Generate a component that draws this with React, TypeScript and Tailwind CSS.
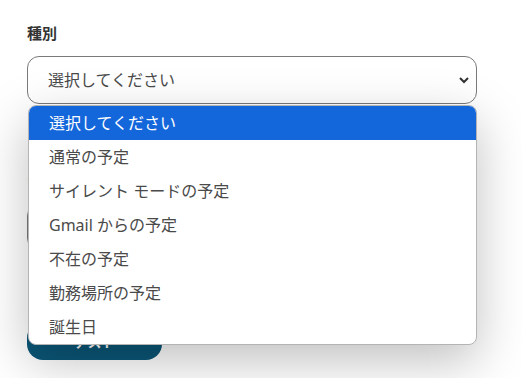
import React from "react";

const items = [
  "選択してください",
  "通常の予定",
  "サイレント モードの予定",
  "Gmail からの予定",
  "不在の予定",
  "勤務場所の予定",
  "誕生日",
];

export default function App() {
  return (
    <div
      className="relative w-[522px] h-[378px] overflow-hidden bg-white"
      style={{ fontFamily: '"Noto Sans", "Noto Sans CJK JP", sans-serif' }}
    >
      <div className="flex flex-col pl-[27px] pt-[22px] w-[477px]">
        <div className="text-[15px] leading-[22px] font-bold text-[#333]">種別</div>
        <div className="mt-[12px] h-[48px] w-[450px] rounded-[12px] border border-[#7a7a7a] flex items-center justify-between pl-[20px] pr-[6px]">
          <span className="text-[16px] text-[#4a4a4a]">選択してください</span>
          <svg width="12" height="12" viewBox="0 0 12 12">
            <polyline points="2,4 6,8 10,4" fill="none" stroke="#333" strokeWidth="2" />
          </svg>
        </div>
        <div className="mt-[64px] text-[15px] leading-[22px] font-bold text-[#333]">タイトル</div>
        <div className="mt-[14px] h-[46px] w-[450px] rounded-[12px] border border-[#7a7a7a]" />
        <div className="mt-[72px] h-[38px] w-[135px] rounded-[16px] bg-[#0b5778] flex items-center justify-center text-white text-[14px] font-bold">
          テスト
        </div>
      </div>

      <div className="absolute left-[28px] top-[105px] w-[449px] rounded-[8px] border border-[#b4b4b4] bg-white overflow-hidden shadow-[0_16px_50px_rgba(0,0,0,0.25)]">
        {items.map((t, i) => (
          <div
            key={t}
            className={
              i === 0
                ? "h-[34px] flex items-center pl-[20px] text-[16px] bg-[#1467db] text-white"
                : "h-[34px] flex items-center pl-[20px] text-[16px] text-[#4a4a4a]"
            }
          >
            {t}
          </div>
        ))}
      </div>
    </div>
  );
}
